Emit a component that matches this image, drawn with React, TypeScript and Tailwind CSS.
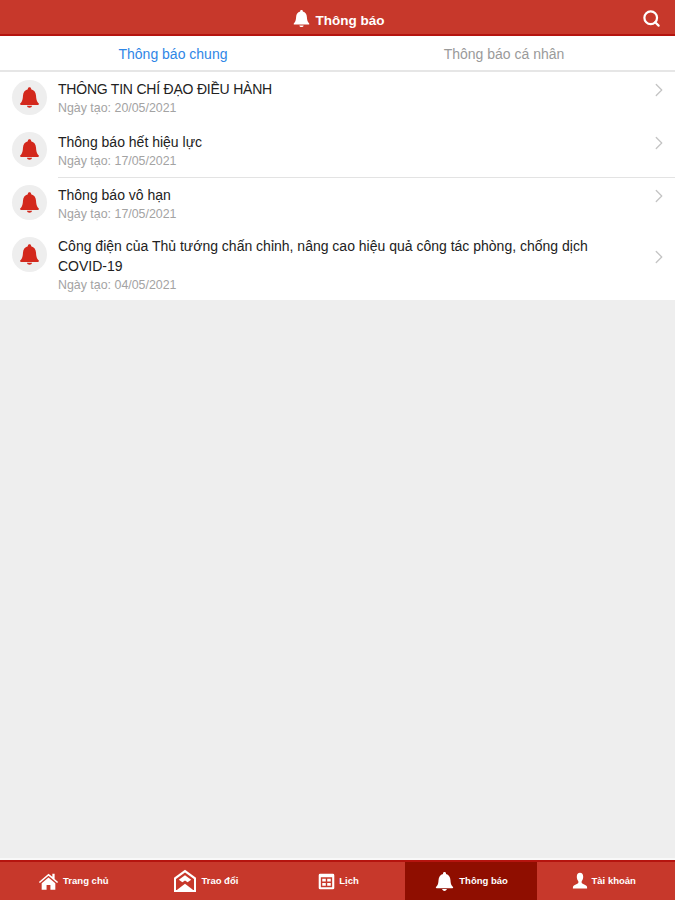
import * as React from "react";
import { ChevronRight, Search } from "lucide-react";

// bell drawn by hand, lucide's is outline only
function BellIcon({ className }: { className?: string }) {
  return (
    <svg viewBox="0 0 24 24" className={className} fill="currentColor">
      <path d="M12 1.2c-1 0-1.7.7-1.7 1.6v.5C7 4.100 5.400 6.800 5.200 10.200c-.2 3.500-.7 5.500-1.900 7-.6.700-1.200 1.100-1.200 1.700 0 .5.400.8 1 .8h17.800c.6 0 1-.3 1-.8 0-.6-.6-1-1.200-1.700-1.200-1.500-1.700-3.500-1.900-7-.2-3.400-1.800-6.100-5.100-6.900v-.5c0-.9-.7-1.600-1.700-1.600z" />
      <path d="M9.300 20.700h5.400c-.2 1.200-1.300 2.100-2.700 2.100s-2.500-.9-2.700-2.100z" />
    </svg>
  );
}

function HomeIcon({ className }: { className?: string }) {
  return (
    <svg viewBox="0 0 24 24" className={className} fill="currentColor">
      <path d="M12 3 1 12.500l1.200 1.300L12 5.500l9.800 8.300 1.200-1.300-4-3.400V3h-2.600v3.600z" />
      <path d="M12 7.500 4.200 14v7.500h5.600v-5.600h4.400v5.600h5.600V14z" />
    </svg>
  );
}

function MailIcon({ className }: { className?: string }) {
  return (
    <svg viewBox="0 0 24 24" className={className} fill="currentColor">
      <path fillRule="evenodd" d="M12 .8 1 8.800V23h22V8.800zM12 3.400 21 10v11H3V10z" />
      <path d="M12 6.200 18.200 10.700 14.600 13.300 12 11.500 9.400 13.300 5.800 10.700z" />
      <path d="M2.500 22 12 14.800 21.500 22z" />
    </svg>
  );
}

function CalendarIcon({ className }: { className?: string }) {
  return (
    <svg viewBox="0 0 24 24" className={className} fill="currentColor">
      <path
        fillRule="evenodd"
        d="M3 1h18a2 2 0 0 1 2 2v18a2 2 0 0 1-2 2H3a2 2 0 0 1-2-2V3a2 2 0 0 1 2-2zM4 6v14h16V6zM6 8h5v4H6zM13 8h5v4h-5zM6 14h5v4H6zM13 14h5v4h-5z"
      />
    </svg>
  );
}

function UserIcon({ className }: { className?: string }) {
  return (
    <svg viewBox="0 0 24 24" preserveAspectRatio="none" className={className} fill="currentColor">
      <path d="M12 1c-3 0-4.800 2.200-4.800 5.300 0 2.400.9 4.600 2.300 5.900v2.300c-1.300 1.300-6.300 2.500-7.500 4.300-.5.800-.7 2.100-.7 3.200h21.400c0-1.100-.2-2.400-.7-3.200-1.200-1.800-6.200-3-7.500-4.300v-2.300c1.400-1.300 2.300-3.500 2.300-5.900C16.800 3.200 15 1 12 1z" />
    </svg>
  );
}

const notices = [
  { title: "THÔNG TIN CHÍ ĐẠO ĐIỀU HÀNH", date: "20/05/2021", line: false, pad: "py-[7px]", bell: "mt-[8px]", tight: true },
  { title: "Thông báo hết hiệu lực", date: "17/05/2021", line: true, pad: "py-[7px]", bell: "mt-[7px]", tight: false },
  { title: "Thông báo vô hạn", date: "17/05/2021", line: false, pad: "py-[7px]", bell: "mt-[7px]", tight: false },
  {
    title: "Công điện của Thủ tướng chấn chỉnh, nâng cao hiệu quả công tác phòng, chống dịch COVID-19",
    date: "04/05/2021",
    line: false,
    pad: "py-[5px]",
    bell: "mt-[6px]",
    tight: false,
  },
];

const navItems = [
  { label: "Trang chủ", Icon: HomeIcon, size: "h-[21px] w-[21px]", active: false },
  { label: "Trao đổi", Icon: MailIcon, size: "h-[24px] w-[24px]", active: false },
  { label: "Lịch", Icon: CalendarIcon, size: "h-[17px] w-[17px]", active: false },
  { label: "Thông báo", Icon: BellIcon, size: "h-[21px] w-[21px]", active: true },
  { label: "Tài khoản", Icon: UserIcon, size: "h-[18px] w-[16px]", active: false },
];

export default function App() {
  return (
    <div className="flex h-[900px] w-[675px] flex-col overflow-hidden bg-[#eeeeee] font-['Liberation_Sans',Arial,sans-serif]">
      {/* Header */}
      <header className="relative flex h-9 shrink-0 items-center justify-center gap-[5px] border-b-2 border-[#b5140f] bg-[#c7382b] pl-[1px] text-white">
        <BellIcon className="mt-[2px] h-[19px] w-[19px]" />
        <span className="pt-[9px] text-[13.5px] font-bold">Thông báo</span>
        <Search className="absolute right-[14px] top-[9px] h-[19px] w-[19px]" strokeWidth={2.8} />
      </header>

      {/* Tabs */}
      <div className="flex h-9 shrink-0 border-b-2 border-[#e6e6e6] bg-white pt-[2px] text-[14px]">
        <div className="flex w-[346px] items-center justify-center text-[#2f86e6]">Thông báo chung</div>
        <div className="flex flex-1 items-center justify-center pr-[13px] text-[#9a9a9a]">Thông báo cá nhân</div>
      </div>

      {/* List */}
      <div className="flex shrink-0 flex-col bg-white">
        {notices.map((n) => (
          <div key={n.date + n.title} className="flex items-start pl-3">
            <div
              className={`flex h-[35px] w-[35px] shrink-0 items-center justify-center rounded-full bg-[#eeeeee] text-[#d3281c] ${n.bell}`}
            >
              <BellIcon className="h-[23px] w-[23px]" />
            </div>
            <div
              className={`ml-[11px] flex min-w-0 flex-1 items-center border-b pr-[5px] ${n.pad} ${
                n.line ? "border-[#e3e3e3]" : "border-transparent"
              }`}
            >
              <div className="min-w-0 flex-1 pr-[38px]">
                <p className={`text-[14px] leading-[20px] text-[#222222] ${n.tight ? "tracking-[-0.22px]" : ""}`}>
                  {n.title}
                </p>
                <p className="mt-[1px] text-[12.4px] leading-[17px] text-[#a3a3a3]">Ngày tạo: {n.date}</p>
              </div>
              <ChevronRight className="mb-[16px] h-[22px] w-[22px] shrink-0 text-[#c4c4c4]" strokeWidth={1.4} />
            </div>
          </div>
        ))}
      </div>

      <div className="flex-1" />

      {/* Bottom navigation */}
      <div className="h-[2px] shrink-0 bg-[#f8f8f8]" />
      <nav className="grid h-10 shrink-0 grid-cols-5 border-t-2 border-[#b5140f] bg-[#c7382b] pl-[7px] pr-[5px] text-white">
        {navItems.map(({ label, Icon, size, active }) => (
          <div
            key={label}
            className={`flex items-center justify-center gap-[4px] ${active ? "bg-[#8f0e00]" : ""}`}
          >
            <Icon className={size} />
            <span className="text-[9.5px] font-bold">{label}</span>
          </div>
        ))}
      </nav>
    </div>
  );
}
